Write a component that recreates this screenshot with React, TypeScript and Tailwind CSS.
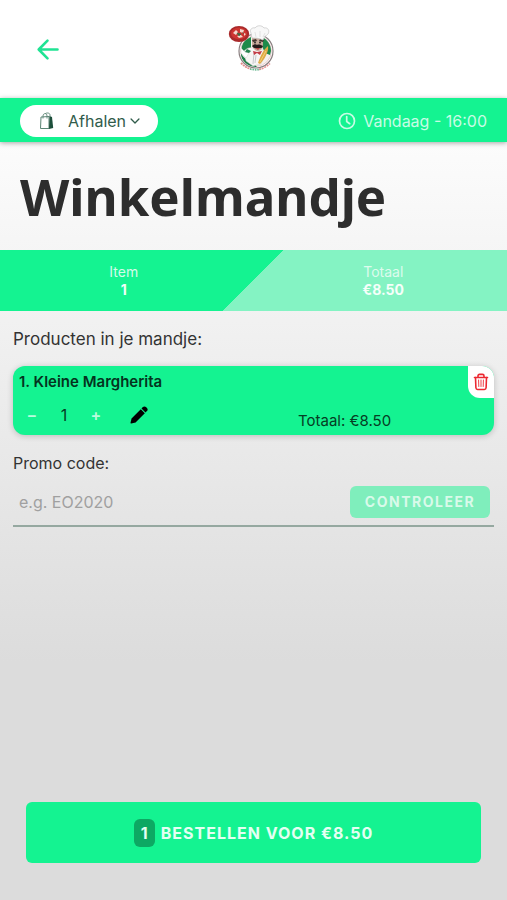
import { useState } from "react";
import { IoChevronDown } from "react-icons/io5";

function ChefLogo() {
  return (
    <svg viewBox="0 0 48 50" className="h-[50px] w-12" role="img" aria-label="Pizzeria">
      <circle cx="28" cy="27" r="17" fill="#fff" stroke="#8a7f80" strokeWidth="1.2" />
      <circle cx="28" cy="27" r="15.4" fill="#f4f1ee" stroke="#d9a5a5" strokeWidth="0.5" />
      <path d="M14 22c1-4 4-7 9-9v14l-10 1z" fill="#1f8a4a" />
      <path d="M34 13c5 2 9 8 9 14l-1 4-5-2-4-9z" fill="#1f8a4a" />
      <path d="M12.8 29c3 6 8 8 14 11l2 3C20 43 13 37 12.8 29z" fill="#1a7d45" />
      <path d="M16 27c3-3 6-4 9-3l5 1 5 1 2 5-4 9-8 2-7-5z" fill="#f7f5f4" stroke="#cfc8c8" strokeWidth="0.5" />
      <path d="M13 24l4 4 4 1-3 5-5-5z" fill="#fff" stroke="#ccc" strokeWidth="0.4" />
      <path d="M26 29l-1 11M28 31l-1 8" stroke="#a5abb0" strokeWidth="0.6" fill="none" />
      <path d="M24 14h11v6c0 4-2 7-5 7s-6-3-6-7z" fill="#c9aa9b" />
      <path d="M24 16l4-1 1 2-4 1zM31 17l1-2 4 1-1 2z" fill="#45352f" />
      <circle cx="27" cy="18.5" r="0.9" fill="#222" />
      <circle cx="32" cy="18.5" r="0.9" fill="#222" />
      <path d="M24 22c2-2 4-2 5-1 2-1 4 0 6 1-1 3-3 2-5 2s-4 1-6-2z" fill="#251a1a" />
      <path d="M27 24h5l-2 2z" fill="#b84343" />
      <path d="M25 27l4 1 5-1-2 4-3-2-3 2z" fill="#c33c46" />
      <path d="M19 25l4 2-2 2-4-1z" fill="#27844f" />
      <path d="M40 22c1 6-4 14-8 18l-2-1c2-6 5-13 10-17z" fill="#dfaa45" />
      <path d="M38 27l-6 11" stroke="#f4d481" strokeWidth="0.9" />
      <path d="M24 14l-1-5c-2-3 1-6 4-5 2-3 7-3 9 0 4-1 6 3 4 6-1 1-2 2-3 2l-2 4c-4-2-8-2-11-2z" fill="#f8f8f8" stroke="#c4c4c4" strokeWidth="0.7" />
      <path d="M27 8l1 5M32 7v6M37 9l-2 4" stroke="#d2d2d2" strokeWidth="0.6" />
      <ellipse cx="11" cy="10" rx="10.2" ry="8" fill="#a92a2b" />
      <ellipse cx="11" cy="9.4" rx="8" ry="5.8" fill="#ce3531" />
      <path d="M5 9l3-3 2 2-2 3zM12 5l4 1-1 3-3-1zM9 12l4-1 2 2-4 1zM16 9l2 1-2 2z" fill="#f4d8ce" />
      <path d="M9 9l4 1-2 2zM14 8l2 2" fill="#337344" stroke="#337344" strokeWidth="0.5" />
      <path d="M13 39c3 3 6 5 10 6" fill="none" stroke="#e08a8a" strokeWidth="1.8" strokeDasharray="2 0.7" />
      <path d="M22 45c4 1 8 1 11 0" fill="none" stroke="#6cb893" strokeWidth="1.8" strokeDasharray="1.6 0.8" />
      <path d="M31 45.5c4-1 8-3 11-6" fill="none" stroke="#e39292" strokeWidth="1.6" strokeDasharray="2 0.8" />
    </svg>
  );
}

function ShoppingBag() {
  return (
    <svg viewBox="0 0 16 18" className="h-[18px] w-4" aria-hidden="true">
      <path d="M2 5l8-.5V16.500H1.500z" fill="#fff" stroke="#5b8474" strokeWidth="1" />
      <path d="M10.500 4l2.500 1 1.200 11-4.200 1z" fill="#1d4f3b" />
      <path d="M4 6.500V4c0-3 4-3.400 4 0v2.500M6 2c1-1.500 5-1.500 5 1v2" fill="none" stroke="#5b8474" strokeWidth="0.9" />
    </svg>
  );
}

function BackArrow() {
  return (
    <svg viewBox="0 0 24 24" className="size-6" fill="none" stroke="currentColor" strokeWidth="2.6" strokeLinecap="round" strokeLinejoin="round" aria-hidden="true">
      <path d="M11.500 3.700L2.700 12.500l8.800 8.800M3.200 12.500H21.500" />
    </svg>
  );
}

function Clock() {
  return (
    <svg viewBox="0 0 18 18" className="size-[18px]" fill="none" stroke="currentColor" strokeWidth="1.700" strokeLinecap="round" strokeLinejoin="round" aria-hidden="true">
      <circle cx="9" cy="9" r="7.500" />
      <path d="M8.700 4.500v5l3 2.200" />
    </svg>
  );
}

function TrashCan() {
  return (
    <svg viewBox="0 0 16 18" className="h-[18px] w-4" fill="none" stroke="currentColor" strokeLinecap="round" strokeLinejoin="round" aria-hidden="true">
      <path d="M2.500 4.500l.4 10.300c.1 1.100.8 1.700 1.700 1.700h6.800c1 0 1.600-.6 1.700-1.700l.4-10.300" strokeWidth="1.600" />
      <path d="M1.500 4.500h13M5 4V3c0-1 .6-1.600 1.500-1.600h3c.9 0 1.500.6 1.500 1.600v1" strokeWidth="1.600" />
      <path d="M5.600 7l.2 6.500M8 7v6.500M10.400 7l-.2 6.500" strokeWidth="0.9" />
    </svg>
  );
}

function Pencil() {
  return (
    <svg viewBox="0 0 18 18" className="size-[18px]" fill="currentColor" aria-hidden="true">
      <path d="M1.600 12.400L10.800 3.200l4 4-9.200 9.200-4.400 1.100c-.5.100-.8-.2-.7-.7z" />
      <path d="M11.500 2.500l1.400-1.400c1-1 2.200-.9 3.100 0l.9.900c1 1 1 2.200 0 3.100l-1.400 1.400z" />
    </svg>
  );
}

export default function App() {
  const [count, setCount] = useState(1);
  const [method, setMethod] = useState("Afhalen");
  const [code, setCode] = useState("");
  const total = "€" + (count * 8.5).toFixed(2);

  return (
    <div className="flex min-h-screen flex-col bg-[#dcdcdc] font-['Inter','Liberation_Sans',sans-serif] text-[#333]">
      <header className="grid h-[98px] grid-cols-[1fr_auto_1fr] items-center bg-white px-9">
        <button aria-label="Terug" className="justify-self-start text-[#20e394]">
          <BackArrow />
        </button>
        <div className="pr-1">
          <ChefLogo />
        </div>
      </header>

      <div className="z-10 flex h-11 items-center justify-between bg-[#14f391] px-5 pt-px shadow-[0_1px_5px_rgba(0,0,0,0.35)]">
        <label className="flex h-8 items-center rounded-full bg-white px-4 text-[#315c4b]">
          <span className="mr-[11px] ml-px flex w-5 justify-center">
            <ShoppingBag />
          </span>
          <select
            aria-label="Bestelmethode"
            value={method}
            onChange={(e) => setMethod(e.target.value)}
            className="field-sizing-content h-7 appearance-none bg-transparent text-base leading-7 outline-none"
          >
            <option>Afhalen</option>
            <option>Bezorgen</option>
          </select>
          <IoChevronDown className="ml-0.5 size-3.5" aria-hidden="true" />
        </label>
        <button className="flex items-center gap-[7px] text-base text-[#c8fce5]">
          <Clock />
          Vandaag - 16:00
        </button>
      </div>

      <main className="flex flex-1 flex-col bg-[linear-gradient(to_bottom,#fcfcfc_0,#dcdcdc_520px)]">
        <h1 className="px-5 py-[18px] font-['Noto_Sans','Liberation_Sans',sans-serif] text-[51px] leading-[72px] font-bold text-[#2d2d2d]">
          Winkelmandje
        </h1>

        <dl className="grid h-[61px] grid-cols-2 content-center gap-3 bg-[linear-gradient(135deg,#14f391_50%,#84f3c3_50%)] text-center text-sm leading-[18px]">
          <div>
            <dt className="text-[#d3fbe9]">Item</dt>
            <dd className="font-bold text-[#effff8]">{count}</dd>
          </div>
          <div>
            <dt className="text-[#dcfbed]">Totaal</dt>
            <dd className="font-bold text-[#f5fffa]">{total}</dd>
          </div>
        </dl>

        <section className="px-[13px] pt-4">
          <h2 className="text-[17px] leading-6">Producten in je mandje:</h2>
          <article className="mt-[15px] flex h-[69px] flex-col justify-between overflow-hidden rounded-xl bg-[#14f391] text-[#063d24] shadow-[0_1px_6px_rgba(0,0,0,0.2)]">
            <div className="flex items-start justify-between">
              <h3 className="px-1.5 pt-1.5 text-[15px] leading-5 font-semibold text-[#04331e]">1. Kleine Margherita</h3>
              <button
                aria-label="Verwijderen"
                className="flex h-8 w-[26px] items-center justify-center rounded-bl-xl bg-white text-[#ec2831]"
              >
                <TrashCan />
              </button>
            </div>
            <div className="grid h-9 grid-cols-[285px_1fr]">
              <div className="flex h-8 items-center pl-[7px]">
                <button
                  aria-label="Minder"
                  onClick={() => setCount(Math.max(1, count - 1))}
                  className="w-6 text-base font-semibold text-[#b9fbdd]"
                >
                  −
                </button>
                <output className="w-10 text-center text-base">{count}</output>
                <button
                  aria-label="Meer"
                  onClick={() => setCount(count + 1)}
                  className="w-6 text-base font-semibold text-[#b9fbdd]"
                >
                  +
                </button>
                <button aria-label="Bewerken" className="ml-[22px] text-black">
                  <Pencil />
                </button>
              </div>
              <p className="pt-3 text-[15px] leading-5">Totaal: {total}</p>
            </div>
          </article>

          <label htmlFor="promo" className="mt-4 block text-base leading-6">
            Promo code:
          </label>
          <div className="mt-[11px] flex h-[41px] items-start border-b-2 border-[#95a8a0] pr-1 pl-1.5">
            <input
              id="promo"
              value={code}
              onChange={(e) => setCode(e.target.value)}
              placeholder="e.g. EO2020"
              className="h-8 min-w-0 flex-1 bg-transparent text-base outline-none placeholder:text-[#a0a0a0]"
            />
            <button className="h-8 w-[140px] rounded-md bg-[#7feebc] text-sm font-bold tracking-[1.5px] text-[#d9faea]">
              CONTROLEER
            </button>
          </div>
        </section>

        <footer className="mt-auto px-[26px] pb-[37px]">
          <button className="flex h-[61px] w-full items-center justify-center gap-1.5 rounded-md bg-[#14f391] text-base font-bold tracking-[1px] text-[#e4fff3]">
            <span className="flex h-7 w-[21px] items-center justify-center rounded-md bg-[#0da863] tracking-normal">
              {count}
            </span>
            BESTELLEN VOOR {total}
          </button>
        </footer>
      </main>
    </div>
  );
}
